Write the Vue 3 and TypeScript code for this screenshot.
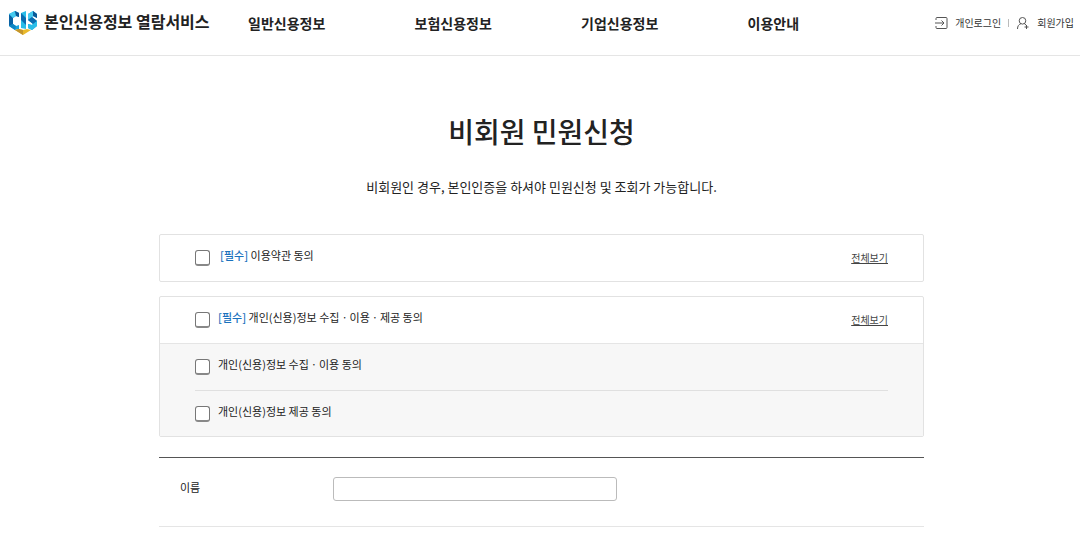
<script setup lang="ts">
import { ref } from 'vue'

interface Consent {
  id: string
  label: string
}

const menus: string[] = ['일반신용정보', '보험신용정보', '기업신용정보', '이용안내']
const details: Consent[] = [
  { id: 'collect', label: '개인(신용)정보 수집ㆍ이용 동의' },
  { id: 'provide', label: '개인(신용)정보 제공 동의' },
]
const agreed = ref<string[]>([])
const name = ref('')
</script>

<template>
  <div class="page">
    <header class="header">
      <a class="brand" href="#">
        <svg class="logo" viewBox="0 0 30 25" aria-hidden="true">
          <path fill="#1aa3dc" d="M1 4 7 1l4 2v4L8 6 5 8v6l3 2 3-1v4l-4 1-6-4z" />
          <path fill="#0b62a4" d="M1 4l4 4v6l-4 2z" />
          <path fill="#45caef" d="M1 4l6-3 1 5-3 2z" />
          <path fill="#0a5a98" d="M7 1l4 2v4L8 6z" />
          <path fill="#0f86c4" d="M1 16l4-2 3 2-1 4z" />
          <path fill="#29bde8" d="M13 3l5-2v18l-5-1z" />
          <path fill="#0b6cb0" d="M13 3l5 5v7l-5-5z" />
          <path fill="#1aa3dc" d="M20 4l5-3 4 3v4l-4-2-1 1 5 4v5l-5 4-4-2v-4l4 1 1-1-5-4z" />
          <path fill="#45caef" d="M20 4l5-3v5l-1 1-4 3z" />
          <path fill="#0a5a98" d="M25 1l4 3v4l-4-2z" />
          <path fill="#0b6cb0" d="M20 10l4-3 5 4-4 3z" />
          <path fill="#29bde8" d="M29 11v5l-5 4-4-2v-4l4 1z" />
          <path fill="#e9b92c" d="M7 20l4-1 4 1 4-1 4 1-8 5z" />
          <path fill="#c3952c" d="M7 20l4-1 4 1v5z" />
        </svg>
        <span>본인신용정보 열람서비스</span>
      </a>
      <nav class="menu">
        <a v-for="menu in menus" :key="menu" href="#">{{ menu }}</a>
      </nav>
      <div class="account">
        <a href="#">
          <svg class="icon" viewBox="0 0 14 14" aria-hidden="true">
            <path d="M2 4V2.500Q2 1.500 3 1.500h9q1 0 1 1v9q0 1-1 1H3q-1 0-1-1V10M1 7h9M7.500 4.500 10 7 7.500 9.500" />
          </svg>
          <span>개인로그인</span>
        </a>
        <span class="divider"></span>
        <a href="#">
          <svg class="icon" viewBox="0 0 14 14" aria-hidden="true">
            <circle cx="6.500" cy="4.800" r="3.300" />
            <path d="M1.500 13c0-3 1.300-4.500 3.300-5.200M8.300 7.600l1.700 1.400M10.500 9v4M8.500 11h4" />
          </svg>
          <span>회원가입</span>
        </a>
      </div>
    </header>

    <main class="content">
      <h1>비회원 민원신청</h1>
      <p class="intro">비회원인 경우, 본인인증을 하셔야 민원신청 및 조회가 가능합니다.</p>

      <section class="box">
        <div class="row">
          <input id="terms" v-model="agreed" type="checkbox" value="terms" />
          <label class="wide" for="terms"><em>[필수]</em> 이용약관 동의</label>
          <a class="more" href="#">전체보기</a>
        </div>
      </section>

      <section class="box">
        <div class="row">
          <input id="privacy" v-model="agreed" type="checkbox" value="privacy" />
          <label for="privacy"><em>[필수]</em> 개인(신용)정보 수집ㆍ이용ㆍ제공 동의</label>
          <a class="more" href="#">전체보기</a>
        </div>
        <div class="details">
          <div v-for="item in details" :key="item.id" class="row">
            <input :id="item.id" v-model="agreed" type="checkbox" :value="item.id" />
            <label :for="item.id">{{ item.label }}</label>
          </div>
        </div>
      </section>

      <form class="form" @submit.prevent>
        <label for="name">이름</label>
        <input id="name" v-model="name" type="text" />
      </form>
    </main>
  </div>
</template>

<style>
body {
  margin: 0;
  background: #fff;
}
</style>

<style scoped>
.page {
  color: #222;
  font-family: "Noto Sans CJK KR", sans-serif;
  font-size: 11px;
  line-height: 16px;
}

.page * {
  box-sizing: border-box;
}

a {
  color: inherit;
  text-decoration: none;
}

.header {
  display: grid;
  grid-template-columns: 240px minmax(0, 666px) 1fr;
  align-items: center;
  height: 56px;
  padding: 0 6px 10px 8px;
  border-bottom: 1px solid #e5e5e5;
}

.brand {
  display: flex;
  align-items: center;
  gap: 6px;
  font-size: 16px;
  font-weight: 700;
  line-height: 24px;
  white-space: nowrap;
}

.brand span {
  padding-bottom: 3px;
}

.logo {
  width: 30px;
  height: 25px;
}

.menu {
  display: grid;
  grid-template-columns: repeat(4, 1fr);
  font-size: 14px;
  font-weight: 700;
  line-height: 24px;
  white-space: nowrap;
}

.account {
  display: flex;
  align-items: center;
  justify-content: flex-end;
  gap: 7px;
  color: #333;
  font-size: 10px;
  white-space: nowrap;
}

.account a {
  display: flex;
  align-items: center;
  gap: 7px;
}

.icon {
  width: 14px;
  height: 14px;
  fill: none;
  stroke: #555;
  stroke-width: 1;
}

.divider {
  width: 1px;
  height: 8px;
  background: #bbb;
}

.content {
  max-width: 768px;
  margin: 0 auto;
  padding: 55px 0 0 3px;
}

h1 {
  margin: 0;
  font-size: 28px;
  font-weight: 500;
  line-height: 40px;
  text-align: center;
}

.intro {
  margin: 26px 0 37px;
  font-size: 13px;
  line-height: 20px;
  text-align: center;
}

.box {
  margin-bottom: 14px;
  border: 1px solid #e2e2e2;
  border-radius: 2px;
}

.row {
  display: flex;
  align-items: center;
  height: 46px;
  padding: 0 35px;
}

.row label {
  margin-left: 8px;
  padding-bottom: 6px;
}

.row .wide {
  margin-left: 10px;
}

em {
  color: #1971bd;
  font-style: normal;
  font-weight: 500;
}

.row input {
  width: 15px;
  height: 16px;
  margin: 0;
  appearance: none;
  background: #fff;
  border: 1px solid #777;
  border-bottom: 2px solid #888;
  border-radius: 3px;
}

.row input:checked {
  background: #1971bd;
}

.more {
  margin-left: auto;
  color: #444;
  font-size: 10px;
  text-decoration: underline;
}

.box .row > .more {
  padding-bottom: 1px;
}

.details {
  padding: 0 35px;
  background: #f7f7f7;
  border-top: 1px solid #e5e5e5;
}

.details .row {
  padding: 0;
}

.details .row + .row {
  border-top: 1px solid #e0e0e0;
}

.form {
  display: grid;
  grid-template-columns: 153px minmax(0, 284px);
  align-items: center;
  height: 70px;
  margin-top: 20px;
  padding: 0 21px 6px;
  border-top: 1px solid #555;
  border-bottom: 1px solid #e5e5e5;
}

.form label {
  padding-bottom: 5px;
}

.form input {
  width: 100%;
  height: 24px;
  padding: 0 6px;
  font: inherit;
  background: #fff;
  border: 1px solid #bbb;
  border-radius: 3px;
}
</style>
